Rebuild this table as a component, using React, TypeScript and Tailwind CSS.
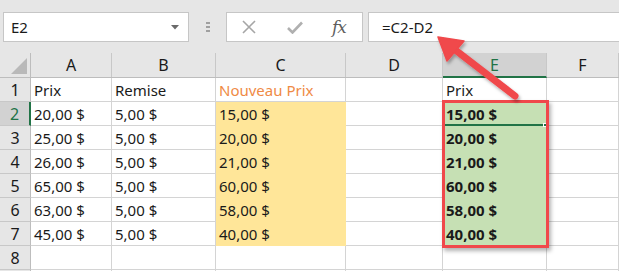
import React from "react";

const colW = ["w-[81px]", "w-[104px]", "w-[130px]", "w-[97px]", "w-[104px]", "flex-1"];
const letters = ["A", "B", "C", "D", "E", "F"];

const rows: string[][] = [
  ["Prix", "Remise", "Nouveau Prix", "", "Prix", ""],
  ["20,00 $", "5,00 $", "15,00 $", "", "15,00 $", ""],
  ["25,00 $", "5,00 $", "20,00 $", "", "20,00 $", ""],
  ["26,00 $", "5,00 $", "21,00 $", "", "21,00 $", ""],
  ["65,00 $", "5,00 $", "60,00 $", "", "60,00 $", ""],
  ["63,00 $", "5,00 $", "58,00 $", "", "58,00 $", ""],
  ["45,00 $", "5,00 $", "40,00 $", "", "40,00 $", ""],
  ["", "", "", "", "", ""],
  ["", "", "", "", "", ""],
];

function cellClass(r: number, c: number) {
  const data = r >= 1 && r <= 6;
  if (data && c === 2) return "bg-[#ffe699] border-[#ffe699]";
  if (data && c === 4) return "bg-[#c6e0b4] border-[#c6e0b4] font-bold";
  if (r === 0 && c === 2) return "border-[#d4d4d4] text-[#ef8a45]";
  return "border-[#d4d4d4]";
}

export default function App() {
  return (
    <div className="relative w-[619px] h-[271px] overflow-hidden bg-white font-['Noto_Sans',sans-serif] text-[#1a1a1a]">
      {/* name box + formula bar */}
      <div className="h-[53px] bg-[#e6e6e6] flex items-start pt-[12px] pl-[3px]">
        <div className="w-[186px] h-[30px] bg-white border border-[#c6c6c6] flex items-center pl-[7px] pr-[9px] text-[15px]">
          <span className="flex-1">E2</span>
          <svg width="8" height="5" viewBox="0 0 8 5">
            <path d="M0 0 L8 0 L4 4.5 Z" fill="#6a6a6a" />
          </svg>
        </div>
        <div className="w-[37px] h-[30px] flex flex-col items-center justify-center gap-[2px]">
          <div className="w-[4px] h-[2px] bg-[#a0a0a0]" />
          <div className="w-[4px] h-[2px] bg-[#a0a0a0]" />
          <div className="w-[4px] h-[2px] bg-[#a0a0a0]" />
        </div>
        <div className="w-[137px] h-[30px] bg-white border border-[#c6c6c6] flex items-center">
          <svg className="ml-[15px]" width="14" height="14" viewBox="0 0 14 14">
            <path d="M1 1 L13 13 M13 1 L1 13" stroke="#a6a6a6" strokeWidth="1.6" />
          </svg>
          <svg className="ml-[31px]" width="16" height="13" viewBox="0 0 16 13">
            <path d="M1 7 L5.5 11.5 L15 1.5" stroke="#b0b0b0" strokeWidth="2.6" fill="none" />
          </svg>
          <span className="ml-[29px] font-['DejaVu_Serif',serif] italic text-[17px] text-[#5e5e5e] leading-none tracking-[-1px]">
            fx
          </span>
        </div>
        <div className="ml-[5px] flex-1 h-[30px] bg-white border border-r-0 border-[#c6c6c6] flex items-center pl-[13px] text-[15px]">
          =C2-D2
        </div>
      </div>

      {/* column headers */}
      <div className="flex h-[25px] bg-[#e6e6e6] border-b border-[#bdbdbd]">
        <div className="w-[31px] border-r border-[#bdbdbd] relative">
          <svg className="absolute left-[11px] top-[5px]" width="16" height="16" viewBox="0 0 16 16">
            <path d="M16 0 L16 16 L0 16 Z" fill="#b9b9b9" />
          </svg>
        </div>
        {letters.map((l, c) => (
          <div
            key={l}
            className={`${colW[c]} flex items-center justify-center text-[16px] ${
              c === 4
                ? "bg-[#d2d2d2] text-[#217346] border-b-2 border-b-[#217346] -mb-px border-r border-r-[#c8c8c8]"
                : "border-r border-[#c8c8c8]"
            }`}
          >
            {l}
          </div>
        ))}
      </div>

      {/* sheet rows */}
      {rows.map((row, r) => (
        <div key={r} className="flex h-[24px]">
          <div
            className={`w-[31px] flex items-center justify-center text-[16px] border-b border-[#c8c8c8] ${
              r === 1
                ? "bg-[#d2d2d2] text-[#217346] border-r-2 border-r-[#217346]"
                : "bg-[#e6e6e6] border-r border-r-[#bdbdbd]"
            }`}
          >
            {r < 8 ? r + 1 : ""}
          </div>
          {row.map((v, c) => (
            <div
              key={c}
              className={`${colW[c]} border-r border-b flex items-center pl-[3px] pt-[2px] text-[15px] whitespace-nowrap ${cellClass(r, c)}`}
            >
              {v}
            </div>
          ))}
        </div>
      ))}

      {/* active cell marker on E2 */}
      <div className="absolute left-[443px] top-[124px] w-[101px] h-[2px] bg-[#217346]" />
      <div className="absolute left-[543px] top-[123px] w-[4px] h-[4px] bg-[#217346] border border-white" />

      {/* highlight frame around results */}
      <div className="absolute left-[442px] top-[100px] w-[107px] h-[148px] border-[3px] border-[#f0484b] shadow-[2px_3px_4px_rgba(0,0,0,0.3)]" />

      {/* callout arrow */}
      <svg className="absolute left-0 top-0" width="619" height="271" viewBox="0 0 619 271">
        <defs>
          <filter id="arrowShadow" x="-20%" y="-20%" width="140%" height="140%">
            <feDropShadow dx="1.5" dy="2.5" stdDeviation="1.5" floodColor="#000" floodOpacity="0.3" />
          </filter>
        </defs>
        <g filter="url(#arrowShadow)">
          <path d="M515 96 L454 49" stroke="#f0484b" strokeWidth="7" strokeLinecap="round" />
          <path d="M438 37 L464 41 L447 61 Z" fill="#f0484b" strokeLinejoin="round" stroke="#f0484b" strokeWidth="1.5" />
        </g>
      </svg>
    </div>
  );
}
